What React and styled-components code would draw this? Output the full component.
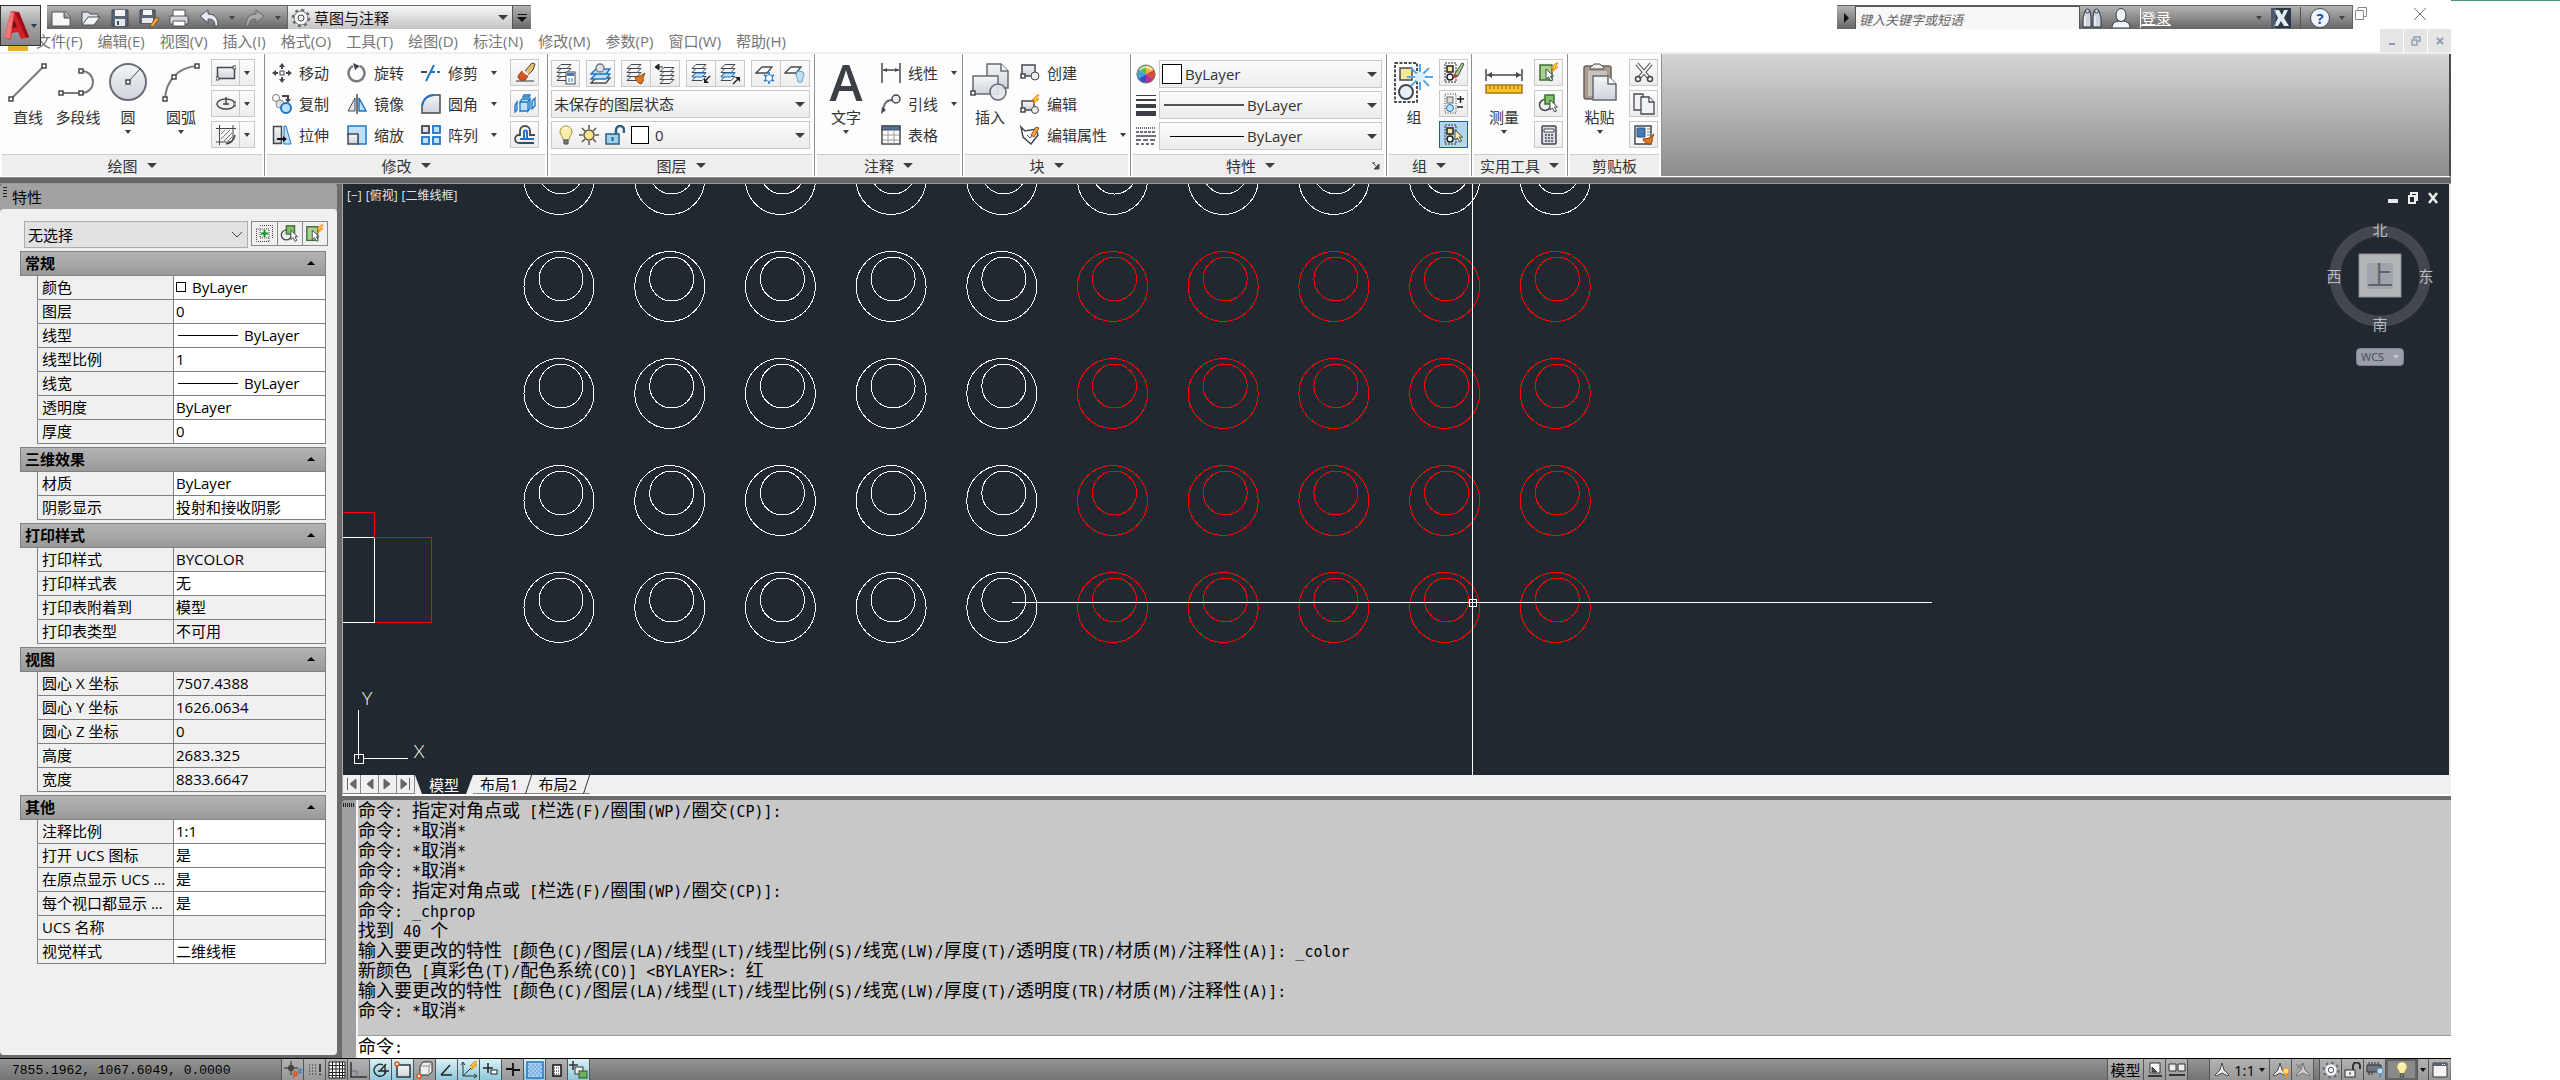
import React, { useState } from 'react';
import styled, { createGlobalStyle, css } from 'styled-components';

const GlobalStyle = createGlobalStyle`
    * {
        box-sizing: border-box;
    }
    body {
        margin: 0;
        background: #fff;
        color: #333;
        font: 15px/20px 'Open Sans', 'Noto Sans CJK SC', sans-serif;
    }
    button, select, input {
        margin: 0;
        padding: 0;
        border: 0;
        background: none;
        color: inherit;
        font: inherit;
        border-radius: 0;
        outline: none;
    }
    select {
        appearance: none;
    }
    svg {
        display: block;
        flex: none;
    }
`;

/* ---------- icons ---------- */

const D = '#44484e';
const B = '#1f74c4';
const L = '#bfe1f8';
const G = '#dfe2ea';

const layers = (
    <g fill="#f4f5f7" stroke={D}>
        <path d="M6 13.500h10l-4 4H2z" />
        <path d="M6 9.500h10l-4 4H2z" />
        <path d="M6 5.500h10l-4 4H2z" />
        <path d="M6 1.500h10l-4 4H2z" />
    </g>
);
const node = (x, y) => (
    <rect x={x - 2} y={y - 2} width="4" height="4" fill="#fff" stroke={D} strokeWidth="1.500" />
);
const pointer = (x, y, fill = '#fff') => (
    <path
        transform={`translate(${x} ${y})`}
        d="M0 0v10l2.500-2 2 4 2-1-2-4h3z"
        fill={fill}
        stroke={D}
    />
);
const bolt = (x, y) => (
    <path
        transform={`translate(${x} ${y})`}
        d="M5 0L0 5h3L1 9l6-5H4l3-4z"
        fill="#ffd23c"
        stroke="#f08a1c"
    />
);
const bulb = (
    <g>
        <path
            d="M7 1C3 1 1 4 1 7c0 3 3 4 3 8h6c0-4 3-5 3-8 0-3-2-6-6-6z"
            fill="#fdeea6"
            stroke="#a58d45"
        />
        <path d="M5 15h4v4H5z" fill="#7b8088" stroke={D} />
        <path d="M5 4c1-1 2-1 3-1" stroke="#fff" strokeWidth="2" fill="none" />
    </g>
);
const gear = (
    <g fill="#f3f4f6" stroke={D}>
        <circle cx="10" cy="10" r="8" strokeWidth="2.500" strokeDasharray="3 3.280" stroke="#666a70" />
        <circle cx="10" cy="10" r="7" stroke="#666a70" />
        <circle cx="10" cy="10" r="3" />
    </g>
);
const annoScale = (
    <path d="M8 1l2 7 5 5-1 1-6-3-6 3-1-1 5-5z" fill="#f4f4f4" stroke={D} />
);

const ICONS = {
    line: [40, 40, <g><path d="M3 37L36 4" stroke="#777b80" strokeWidth="2" />{node(3, 37)}{node(36, 4)}</g>],
    polyline: [40, 40, <g><path d="M3 31h21a11 11 0 000-22" fill="none" stroke="#777b80" strokeWidth="2" />{node(3, 31)}{node(23, 31)}{node(23, 9)}</g>],
    circle: [40, 40, <g><circle cx="20" cy="20" r="18" fill="url(#metal)" stroke="#6b6f75" strokeWidth="2" /><path d="M20 20L32 7" stroke={D} />{node(20, 20)}</g>],
    arc: [40, 40, <g><path d="M4 37C5 18 18 5 36 4" fill="none" stroke="#777b80" strokeWidth="2" />{node(4, 37)}{node(36, 4)}{node(13, 15)}</g>],
    rect: [20, 20, <g><rect x="1.500" y="4.500" width="17" height="11" fill="url(#metal)" stroke={D} strokeWidth="1.500" /><path d="M0 14h3v3H0zM17 3h3v3h-3z" fill="#fff" stroke={D} /></g>],
    ellipse: [20, 20, <g><ellipse cx="10" cy="10" rx="9" ry="5" fill="#eee" stroke={D} strokeWidth="1.500" /><path d="M10 3v8M7 10h6" stroke={D} strokeWidth="1.500" /><path d="M18 8h2v4h-2z" fill="#fff" stroke={D} /></g>],
    hatch: [20, 20, <g><path d="M3.500 0v20M17 0v14M0 3.500h20M0 17h14" stroke={D} fill="none" /><path d="M5 9l4-4M5 14l9-9M8 16l8-8M12 16l4-4" stroke="#777" /><path d="M19 10c-1 5-4 8-9 9" fill="none" stroke={D} strokeWidth="1.500" /></g>],
    move: [20, 20, <g stroke={D} fill={D}><path d="M10 2v4M10 14v4M2 10h4M14 10h4" strokeWidth="2" /><path d="M10 0l3 4H7zM10 20l3-4H7zM0 10l4-3v6zM20 10l-4-3v6z" stroke="none" /><rect x="8" y="8" width="4" height="4" fill="#fff" /></g>],
    rotate: [20, 20, <g><path d="M13 3a8 8 0 11-7 0" fill="none" stroke="#777b80" strokeWidth="2.500" /><path d="M6 0l7 3-5 4z" fill={D} /></g>],
    trim: [20, 20, <g strokeWidth="2" fill="none"><path d="M0 9h6" stroke={D} /><path d="M5 18L13 2" stroke={B} /><path d="M10 9h4M16 9h3" stroke={B} /></g>],
    erase: [22, 22, <g><path d="M2 19h18" stroke="#333" /><path d="M10 10L18 1l3 1-2 6-5 5z" fill="#e8c06c" stroke={D} /><path d="M4 14l4-5 6 5-3 4c-3 1-7 0-7-4z" fill="#d9541e" stroke="#7c3a22" /><path d="M9 9l5 4" stroke="#fff" strokeWidth="2" /></g>],
    copy: [20, 20, <g><circle cx="4" cy="4" r="3.500" fill="#fff" stroke="#777" /><circle cx="8" cy="10" r="4" fill={G} stroke="#888" /><circle cx="14" cy="14" r="5" fill={L} stroke={B} strokeWidth="2" /><path d="M10 2h6v4" fill="none" stroke={D} strokeWidth="2" /><path d="M13 5h6l-3 4z" fill={D} /></g>],
    mirror: [20, 20, <g><path d="M8 4v13H1z" fill={G} stroke={D} /><path d="M12 4v13h7z" fill={L} stroke={B} strokeWidth="1.500" /><path d="M10 0v20" stroke={D} strokeWidth="1.500" /></g>],
    fillet: [20, 20, <g><path d="M1 19V12C2 5 7 1 13 1h6v18z" fill="url(#metal)" stroke={D} strokeWidth="1.500" /><path d="M1 12C2 5 7 1 13 1" fill="none" stroke={B} strokeWidth="2" /></g>],
    explode: [22, 22, <g stroke={B} fill={L} strokeWidth="1.300"><path d="M6 9h8v9H6zM6 9l2-3h8l-2 3zM14 9l2-3v9l-2 3z" /><path d="M1 12l2-3v8l-2 2zM9 4l1-2h6l-1 2zM18 8l3-3v8l-3 3z" /></g>],
    stretch: [20, 20, <g><path d="M1.500 1.500h8v17h-8z" fill="url(#metal)" stroke={D} strokeWidth="1.500" /><path d="M12 1h2l5 18h-7z" fill={L} stroke={B} /><path d="M5 14h7" stroke="#111" strokeWidth="2" /><path d="M11 11l4 3-4 3z" fill="#111" /></g>],
    scale: [20, 20, <g><path d="M1 1h18v18h-8V10H1z" fill={L} stroke={B} strokeWidth="1.500" /><rect x="1" y="9" width="10" height="10" fill="url(#metal)" stroke={D} strokeWidth="1.500" /></g>],
    array: [20, 20, <g strokeWidth="1.800"><rect x="1" y="1" width="7" height="7" fill={G} stroke={D} /><g fill={L} stroke={B}><rect x="12" y="1" width="7" height="7" /><rect x="1" y="12" width="7" height="7" /><rect x="12" y="12" width="7" height="7" /></g></g>],
    offset: [22, 22, <g fill="none"><path d="M20 19H5a4 4 0 010-8h1V7a5 5 0 0110 0v4h5" stroke={D} strokeWidth="1.800" /><path d="M20 15H6h4V8a1.500 1.500 0 013 0v7" stroke={B} strokeWidth="2" /></g>],
    layerProps: [22, 22, <g>{layers}<rect x="11" y="9" width="9" height="12" fill="#fff" stroke={D} /><path d="M12 10h7v3h-7z" fill="#4679b4" /><path d="M13 16h2M16 16h2M13 18h2M16 18h2" stroke={B} /></g>],
    layerMatch: [22, 22, <g stroke={B} fill={L} strokeWidth="1.300"><path d="M6 15h14l-4 5H1z" fill="#fff" stroke={D} /><path d="M6 11h14l-4 5H1zM6 6h14l-4 5H1z" /><circle cx="10" cy="5" r="4" fill={G} stroke="#777" /></g>],
    layerIso: [22, 22, <g>{layers}<path d="M20 10l-5 3-5 1c1 4 3 6 6 7 2-2 3-4 2-6z" fill="#e07820" stroke="#8a4a1a" /></g>],
    layerPrev: [22, 22, <g><g transform="translate(4 3)">{layers}</g><path d="M2 4h7M1 4l4-3v6z" stroke="#222" fill="#222" /></g>],
    layerFreeze: [22, 22, <g>{layers}<path d="M6 10h10l-4 4H2z" fill={L} stroke={B} /><path d="M20 13l-5 5" stroke="#222" strokeWidth="1.500" /><path d="M14 15v5h5z" fill="#222" /></g>],
    layerOff: [22, 22, <g>{layers}<path d="M6 10h10l-4 4H2z" fill={L} stroke={B} /><path d="M14 21l5-5" stroke="#222" strokeWidth="1.500" /><path d="M21 14v5l-5-5z" fill="#222" /></g>],
    layerSnow: [22, 22, <g><path d="M7 4h10l-5 6H1z" fill="#fff" stroke={D} strokeWidth="1.300" /><path d="M14 9v12M9 12l10 6M19 12l-10 6" stroke={B} strokeWidth="1.500" /><circle cx="14" cy="15" r="3.500" fill="#fff" stroke={B} /></g>],
    layerBulb: [22, 22, <g><path d="M7 4h10l-5 6H1z" fill="#fff" stroke={D} strokeWidth="1.300" /><path d="M16 8a4 4 0 014 4c0 2-2 3-2 7h-4c0-4-2-5-2-7a4 4 0 014-4z" fill={L} stroke="#6d9cc8" /></g>],
    bulb: [14, 20, bulb],
    sun: [20, 20, <g stroke="#60584a" strokeWidth="1.500"><path d="M10 0v4M10 16v4M0 10h4M16 10h4M3 3l3 3M14 14l3 3M17 3l-3 3M6 14l-3 3" /><circle cx="10" cy="10" r="5" fill="#ffe48a" /></g>],
    unlock: [20, 20, <g><path d="M11 9V5a4 4 0 018 0v3" fill="none" stroke="#2f5f80" strokeWidth="2.500" /><rect x="1" y="9" width="13" height="10" fill="#9ad2ef" stroke="#2f5f80" strokeWidth="1.500" /><path d="M7.500 12v4" stroke="#2f5f80" strokeWidth="2" /></g>],
    linear: [20, 20, <g stroke={D} fill={D}><path d="M1 0v20M19 0v20M2 7h16" strokeWidth="1.500" /><path d="M2 7l4-2v4zM18 7l-4-2v4z" stroke="none" /></g>],
    leader: [20, 20, <g><path d="M2 17c1-9 4-11 10-11" fill="none" stroke="#666a70" strokeWidth="2" /><circle cx="15" cy="5" r="4" fill="#eee" stroke={D} strokeWidth="1.500" /><path d="M0 20l1-7 4 3z" fill={D} /></g>],
    table: [20, 20, <g><rect x="1" y="1" width="18" height="18" fill="#fff" stroke={D} strokeWidth="1.500" /><path d="M1 1h18v4H1z" fill="#56719c" stroke={D} /><path d="M2 10h16M2 15h16M7 6v13M13 6v13" stroke="#999" /></g>],
    insert: [40, 40, <g stroke="#666a70" strokeWidth="1.500"><path d="M17 2h14l7 7v17H17z" fill="url(#metal)" /><path d="M31 2v7h7" fill="#fff" /><path d="M3 14h25v18H3z" fill="url(#metal)" /><circle cx="28" cy="30" r="8" fill="#e3e6ecdd" />{node(3, 31)}</g>],
    create: [20, 20, <g><rect x="2" y="2" width="13" height="11" fill="url(#metal)" stroke={D} strokeWidth="1.500" /><circle cx="15" cy="13" r="4" fill="#eee" stroke={D} />{node(3, 13)}</g>],
    editBlock: [20, 20, <g><rect x="2" y="7" width="12" height="9" fill="url(#metal)" stroke={D} strokeWidth="1.500" /><circle cx="15" cy="16" r="3.500" fill="#eee" stroke={D} />{node(3, 16)}{bolt(12, 1)}</g>],
    editAttr: [20, 20, <g><path d="M1 2l4 4 11-2 2 6-7 9-8-7z" fill="#fff" stroke={D} strokeWidth="1.500" /><path d="M7 10l3 3 6-7" fill="none" stroke={D} /><path d="M11 10l5-8 3 1-5 9z" fill="#f5a340" stroke="#8d5a23" /></g>],
    wheel: [20, 20, <g><circle cx="10" cy="10" r="9.500" fill="#ddd" /><path d="M10 10V1a9 9 0 018 5z" fill="#f4b63a" /><path d="M10 10l8-4a9 9 0 010 9z" fill="#e2462e" /><path d="M10 10l8 5a9 9 0 01-8 4z" fill="#c0308e" /><path d="M10 10v9a9 9 0 01-8-4z" fill="#3a4fc4" /><path d="M10 10l-8 5a9 9 0 010-9z" fill="#3aa5d8" /><path d="M10 10L2 6a9 9 0 018-5z" fill="#62b844" /><circle cx="10" cy="10" r="9" fill="none" stroke="#777" /><path d="M4 6c3-4 9-4 12 0" stroke="#fff" strokeOpacity=".6" strokeWidth="2" fill="none" /></g>],
    weight: [20, 22, <path d="M0 1h20v1H0zM0 5h20v2H0zM0 10h20v4H0zM0 17h20v5H0z" fill="#3c4046" />],
    ltype: [20, 20, <g stroke="#3c4046" strokeWidth="1.500"><path d="M0 2h20" strokeDasharray="1 1" /><path d="M0 6h20" strokeDasharray="3 1" /><path d="M0 10h20" /><path d="M0 14h20" strokeDasharray="5 2" /><path d="M0 18h20" strokeDasharray="3 2" /></g>],
    group: [40, 42, <g><path d="M1 2h22v39H1z" fill="none" stroke="#111" strokeWidth="1.500" strokeDasharray="3 1.500" /><rect x="6" y="7" width="12" height="12" fill="#f3e79a" stroke={D} strokeWidth="1.500" /><circle cx="12" cy="31" r="7" fill="#e6f0f5" stroke={D} strokeWidth="2" /><g stroke="#5aa7e6" strokeWidth="2"><path d="M26 3v26M13 16h26M17 7l18 18M35 7L17 25" /></g><circle cx="26" cy="16" r="5" fill="#d9f0ff" /></g>],
    groupEdit: [22, 22, <g><path d="M2 1h11v19H2z" fill="none" stroke="#333" strokeDasharray="2 1" /><rect x="4" y="4" width="6" height="6" fill="#f3e79a" stroke="#222" strokeWidth="1.500" /><circle cx="7" cy="15" r="3" fill="#fff" stroke="#222" strokeWidth="1.500" /><path d="M11 13L19 1l2 1-6 12z" fill="#a9cc84" stroke={D} /><path d="M10 17l2-5 3 2z" fill="#c4302b" /></g>],
    groupAdd: [22, 22, <g><path d="M2 1h11v19H2z" fill="none" stroke="#333" strokeDasharray="1 1.500" /><rect x="4" y="4" width="6" height="6" fill="#ddd" stroke="#666" /><circle cx="7" cy="15" r="3.500" fill={L} stroke={B} /><path d="M14 6h7M17.500 3v7M14 14h6" stroke="#222" strokeWidth="1.500" /></g>],
    groupSel: [22, 22, <g><path d="M2 1h11v19H2z" fill="none" stroke="#333" strokeDasharray="2 1" /><rect x="4" y="4" width="6" height="6" fill="#f3e79a" stroke="#222" strokeWidth="1.500" /><circle cx="7" cy="15" r="3" fill="#fff" stroke="#222" strokeWidth="1.500" />{pointer(12, 6, '#fff7b0')}</g>],
    measure: [38, 26, <g><path d="M1 0v12M37 0v12M2 6h34" stroke={D} strokeWidth="1.500" /><path d="M2 6l5-3v6zM36 6l-5-3v6z" fill={D} /><rect x="1" y="16" width="36" height="8" fill="#f7c526" stroke="#a8741c" strokeWidth="1.500" /><path d="M5 17v3M9 17v3M13 17v3M17 17v3M21 17v3M25 17v3M29 17v3M33 17v3" stroke="#8b5e14" /></g>],
    quickSel: [22, 22, <g><rect x="2" y="3" width="12" height="15" fill="#a9d28e" stroke="#3f6f34" strokeWidth="1.500" />{bolt(13, 1)}{pointer(8, 7)}</g>],
    selAll: [22, 22, <g><circle cx="7" cy="12" r="5.500" fill="#eee" stroke={D} strokeWidth="1.500" /><rect x="7" y="2" width="9" height="9" fill="#7fbf6a" stroke="#3f6f34" strokeWidth="1.500" />{pointer(12, 7)}</g>],
    calc: [22, 22, <g><rect x="4" y="2" width="14" height="18" rx="1" fill="#d9dbe0" stroke={D} strokeWidth="1.500" /><path d="M6 5h10v3H6z" fill="#fff" stroke={D} /><path d="M7 11h2M10 11h2M13 11h2M7 14h2M10 14h2M13 14h2M7 17h2M10 17h2M13 17h2" stroke={D} strokeWidth="1.500" /></g>],
    paste: [36, 40, <g><rect x="2" y="4" width="27" height="33" rx="2" fill="#a99c90" stroke="#6b625a" strokeWidth="1.500" /><rect x="6" y="9" width="19" height="25" fill="#c9c2bb" /><path d="M8 7c0-3 3-3 4-5h6c1 2 4 2 4 5z" fill="#eee" stroke={D} /><path d="M11 14h15l8 8v16H11z" fill="url(#metal)" stroke="#666a70" strokeWidth="1.500" /><path d="M26 14v8h8" fill="#fff" stroke="#666a70" strokeWidth="1.500" /></g>],
    cut: [22, 22, <g fill="none" stroke={D}><path d="M4 2l12 14M18 2L6 16" strokeWidth="4" /><path d="M4 2l12 14M18 2L6 16" stroke="#eee" strokeWidth="2" /><circle cx="5" cy="17" r="2.500" strokeWidth="1.500" /><circle cx="17" cy="17" r="2.500" strokeWidth="1.500" /></g>],
    copyClip: [22, 22, <g fill="#f2f3f6" stroke={D} strokeWidth="1.300"><path d="M1 1h9v16H1z" /><path d="M8 4h8l5 5v12H8z" /><path d="M16 4v5h5" fill="#fff" /></g>],
    matchProp: [22, 22, <g><rect x="2" y="2" width="16" height="18" fill="#fff" stroke={D} strokeWidth="1.500" /><path d="M4 4h8v9H4z" fill="#4679b4" stroke="#23548c" /><path d="M14 5h3M14 8h3M14 11h3" stroke="#777" /><path d="M21 10l-5 4-6 1c1 4 4 5 7 5 2-1 3-3 2-5z" fill="#e07820" stroke="#8a4a1a" /></g>],
    newFile: [20, 18, <path d="M1 3h14l4 5v9H1zM13 3v6h6" fill="#f7f7f8" stroke="#555" strokeLinejoin="round" />],
    open: [20, 18, <g stroke="#4b4f55" fill="#dfe2e8"><path d="M1 16V3h6l2 2h8v3" /><path d="M1 16l6-8h12l-6 8z" fill="#f3f4f6" /></g>],
    save: [18, 18, <g><path d="M1 1h16v16H1z" fill="#5b6574" stroke="#3b4350" /><path d="M4 1h10v6H4z" fill="#f3f4f6" /><path d="M4 10h10v7H4z" fill="#e3e6ea" /><path d="M6 12h2v4H6z" fill="#444" /></g>],
    saveAs: [20, 18, <g><path d="M1 1h15v13H1z" fill="#5b6574" stroke="#3b4350" /><path d="M4 1h9v5H4z" fill="#f3f4f6" /><path d="M3 9h11v5H3z" fill="#e3e6ea" /><path d="M11 17l6-9 3 2-6 8z" fill="#f5a340" stroke="#7d5526" /></g>],
    print: [20, 18, <g stroke="#555"><path d="M4 1h12v7H4z" fill="#fff" /><path d="M1 7h18v8H1z" fill="#d5d8de" /><path d="M4 12h12v5H4z" fill="#fff" /></g>],
    undo: [20, 18, <path d="M1 7l8-6v4c6 0 10 3 10 12h-3c0-5-2-7-7-7v4z" fill="#e6eaf2" stroke="#4b5360" strokeLinejoin="round" />],
    redo: [20, 18, <path d="M19 7l-8-6v4C5 5 1 8 1 17h3c0-5 2-7 7-7v4z" fill="#a9a9a9" stroke="#666" strokeLinejoin="round" />],
    gear: [20, 20, gear],
    binoculars: [20, 20, <g stroke="#333a45" fill="#cfd5de"><path d="M3 3h5l1 6v10H1V10zM12 3h5l2 7v9h-8V9z" /><circle cx="5.500" cy="3" r="2" /><circle cx="14.500" cy="3" r="2" /><path d="M3 8v10M13 8v10" stroke="#fff" /></g>],
    user: [20, 20, <g stroke="#333a45" fill="#f0f3f7"><path d="M1 20c0-5 3-6 6-7h6c3 1 6 2 6 7z" /><ellipse cx="10" cy="7" rx="5" ry="6.500" /></g>],
    exchange: [20, 20, <g><path d="M0 0h20v20H0z" fill="#2d3947" /><path d="M3 2h5l3 5 2-5h4l-4 8 5 8h-5l-3-5-3 5H3l4-8z" fill="#e3eaf2" /><path d="M0 0h5v20H0z" fill="#6c7a8a" fillOpacity=".5" /></g>],
    restoreWin: [12, 13, <path d="M.500 3.500h8v9h-8zM3 3V.500h8.500v9H9" fill="none" stroke="#8a8a8a" />],
    closeWin: [14, 14, <path d="M1 1l12 12M13 1L1 13" stroke="#777" fill="none" />],
    mdiMin: [8, 8, <path d="M1 6h6v2H1z" fill="#8fa0b2" />],
    mdiRestore: [10, 10, <path d="M3 3V1h6v4H7M1 4h5v5H1z" fill="none" stroke="#8fa0b2" strokeWidth="1.500" />],
    mdiClose: [8, 8, <path d="M1 1l6 6M7 1L1 7" stroke="#8fa0b2" strokeWidth="2" />],
    vpMin: [10, 10, <path d="M0 6h10v4H0z" fill="#e8e8e8" />],
    vpRestore: [10, 12, <path d="M3 3V1h6v7H7M1 4h6v7H1z" fill="none" stroke="#eee" strokeWidth="2" />],
    vpClose: [10, 12, <path d="M1 1l8 10M9 1L1 11" stroke="#eee" strokeWidth="2.500" />],
    launcher: [8, 8, <path d="M0 1h3M1 1l4 4M7 2v5H2z" stroke={D} fill={D} />],
    pickAdd: [17, 17, <g><path d="M4 .500h12.500V13M.500 4v12.500H13M.500 4H4M13 13v3.500" fill="none" stroke="#444" strokeDasharray="1 1" /><rect x="4" y="4" width="9" height="9" fill="none" stroke="#444" strokeDasharray="1 1" /><path d="M8.500 5v7M5 8.500h7" stroke="#0a9a1a" strokeWidth="2" /></g>],
    // status bar
    infer: [18, 18, <g><path d="M7 0v14M0 7h14" stroke="#222" /><rect x="5" y="5" width="4" height="4" fill="none" stroke="#222" /><path d="M10 17v-6h3v3h-3" fill="none" stroke="#d9541e" strokeWidth="1.500" /><path d="M15 8h2v4h-2z" fill="none" stroke={B} /></g>],
    snap: [16, 16, <g stroke="#222" strokeDasharray="1 2"><path d="M2 3h9M2 6h9M2 9h9M2 12h9" /><path d="M13 2v8" strokeDasharray="none" strokeWidth="1.500" /><path d="M13 12v2" strokeWidth="2" /></g>],
    grid: [18, 18, <g><path d="M1 1h16v16H1z" fill="#fff" /><path d="M1 1h16v16H1zM4.500 1v16M8 1v16M11.500 1v16M14.500 1v16M1 4.500h16M1 8h16M1 11.500h16M1 14.500h16" stroke="#222" fill="none" /></g>],
    ortho: [18, 18, <g fill="none"><path d="M1 1v15h16" stroke="#333" strokeWidth="1.500" /><path d="M2 10h5v6" stroke="#5a6c94" /></g>],
    polar: [16, 16, <g fill="none" stroke="#222" strokeWidth="1.300"><path d="M13 9a6 6 0 11-3-6" /><path d="M5 9h11M7 9l6-7M12 3v9" /></g>],
    osnap: [18, 18, <g><rect x="3" y="4" width="13" height="12" fill="url(#metal)" stroke="#333" strokeWidth="1.500" /><circle cx="3" cy="3" r="2" fill="#fff" stroke="#e0561e" strokeWidth="1.500" /></g>],
    osnap3d: [18, 18, <g><path d="M4 5l3-4h9v10l-3 3H4z" fill="#eceef2" stroke="#333" /><path d="M13 5v9M4 5h9l3-4" fill="none" stroke="#888" /><circle cx="3" cy="15" r="2" fill="#fff" stroke="#e0561e" strokeWidth="1.500" /></g>],
    otrack: [16, 16, <path d="M2 13h11M2 13l9-10" stroke="#222" strokeWidth="1.500" />],
    ducs: [18, 18, <g><path d="M3 2v13h13M3 15l8-8" stroke="#333" fill="none" /><path d="M1 4l2-3 2 3M14 13l3 2-3 2" fill="none" stroke="#333" />{bolt(10, 0)}</g>],
    dyn: [16, 16, <g stroke="#222"><path d="M5 1v10M0 6h10" strokeWidth="1.500" /><rect x="8" y="8" width="6" height="4" fill="#fff" /></g>],
    lwt: [16, 16, <path d="M8 1v13M1 7h7M8 8h7" stroke="#111" strokeWidth="1.800" />],
    tpy: [18, 18, <g><rect x="1" y="1" width="16" height="16" fill="#a5cdf0" stroke={B} strokeWidth="1.500" /><path d="M2 4h14M2 8h14M2 12h14" stroke="#7fb2e2" strokeWidth="2" strokeDasharray="2 2" /><path d="M4 6h12M4 10h12M4 14h12" stroke="#7fb2e2" strokeWidth="2" strokeDasharray="2 2" /></g>],
    qp: [12, 14, <g><rect x="2" y="2" width="8" height="11" fill="#fff" stroke="#111" strokeWidth="1.500" /><path d="M3 5h6M3 8h6M3 11h6" stroke="#111" strokeDasharray="1 1" /></g>],
    cycle: [20, 18, <g><path d="M4 0v9M0 4h9" stroke="#333" strokeWidth="1.500" /><rect x="6" y="6" width="8" height="7" fill="#eee" stroke="#333" /><rect x="10" y="10" width="8" height="7" fill="#6fae5c" stroke="#27581d" /></g>],
    paper: [16, 16, <g><path d="M3 1h10v10H3z" fill="#fff" stroke="#333" /><path d="M5 5v5h5z" fill="#555" stroke="#333" /><path d="M1 14h14" stroke="#333" strokeWidth="2" /></g>],
    quickView: [18, 16, <g><path d="M1 2h7v7H1zM10 2h7v7h-7z" fill="#eee" stroke="#333" /><path d="M1 13h16" stroke="#333" strokeWidth="2" /></g>],
    anno: [16, 16, annoScale],
    annoVis: [18, 16, <g>{annoScale}<circle cx="14" cy="9" r="3" fill="#ffe08a" stroke="#f08a1c" /><path d="M14 12v4" stroke="#f08a1c" strokeWidth="2" /></g>],
    annoAuto: [16, 16, <g opacity=".55">{annoScale}<path d="M2 6L8 1M1 2l6 5" stroke="#444" /></g>],
    lockUi: [18, 16, <g><path d="M9 8V4a3 3 0 017 0v3" fill="none" stroke="#333" strokeWidth="2" /><rect x="1" y="8" width="10" height="7" fill="#eee" stroke="#333" /><path d="M6 10v3" stroke="#333" /></g>],
    hardware: [18, 16, <g><path d="M1 3h14v7H1z" fill="#6d7680" stroke="#333" /><path d="M3 0v3M6 0v3M9 0v3M12 0v3M3 10v3M6 10v3" stroke="#333" /><circle cx="14" cy="9" r="3" fill={L} stroke="#5a8fc0" /><path d="M14 12v4" stroke="#5a8fc0" strokeWidth="2" /></g>],
    clean: [16, 16, <g><path d="M1 1h14v14H1z" fill="#f4f4f4" stroke="#333" /><path d="M1 1h14v3H1z" fill="#59616e" /><path d="M10 2.500h1M12 2.500h1" stroke="#fff" /></g>],
};

const Icon = ({ name, size }) => {
    const [w, h, art] = ICONS[name];
    return (
        <svg
            width={size ? Math.round((w * size) / h) : w}
            height={size || h}
            viewBox={`0 0 ${w} ${h}`}
            fill="none"
            aria-hidden="true"
        >
            {art}
        </svg>
    );
};

const Caret = styled.span`
    flex: none;
    width: 0;
    height: 0;
    border: ${p => (p.$big ? 5 : 3)}px solid transparent;
    border-bottom-width: 0;
    border-top: ${p => (p.$big ? 5 : 4)}px solid ${p => p.$color || '#3a3e42'};
`;

/* ---------- frame ---------- */

const Desktop = styled.div`
    display: flex;
    min-height: 100vh;
`;

const DesktopEdge = styled.div`
    width: 109px;
    flex: none;
    border-top: 1px solid #4f9373;
`;

const Window = styled.div`
    position: relative;
    flex: 1;
    min-width: 0;
    display: flex;
    flex-direction: column;
    padding-top: 5px;
`;

const AppButton = styled.button`
    position: absolute;
    z-index: 2;
    top: 5px;
    left: 0;
    width: 41px;
    height: 41px;
    display: flex;
    align-items: center;
    padding-left: 3px;
    gap: 1px;
    border: 1px solid #333;
    background: linear-gradient(#d8d8d8, #a6a6a6 45%, #858585);
`;

const TitleRow = styled.header`
    display: flex;
    height: 24px;
    padding-left: 47px;
`;

const bar = css`
    display: flex;
    align-items: center;
    overflow: hidden;
    border-top: 1px solid #666;
    background: linear-gradient(#b3b3b3, #666);
`;

const QuickBar = styled.div`
    ${bar}
    padding-left: 4px;
`;

const QuickTools = styled.div`
    display: flex;
    align-items: center;
    gap: 10px;
    padding-right: 6px;
`;

const IconButton = styled.button`
    display: flex;
    align-items: center;
    justify-content: center;
`;

const Workspace = styled.label`
    display: flex;
    align-items: center;
    width: 225px;
    height: 23px;
    padding: 0 4px 0 3px;
    background: linear-gradient(#f7f7f7, #c4c4c4);
    border-left: 1px solid #666;
    color: #111;

    select {
        flex: 1;
        min-width: 0;
        padding-left: 3px;
    }
`;

const BarEnd = styled.button`
    display: flex;
    flex-direction: column;
    align-items: center;
    justify-content: center;
    gap: 2px;
    width: 19px;
    height: 23px;
    border-left: 1px solid #555;

    &::before {
        content: '';
        width: 9px;
        height: 1px;
        background: #111;
    }
`;

const InfoBar = styled.div`
    ${bar}
    width: 516px;
    margin-left: auto;
    border-right: 1px solid #666;
`;

const InfoToggle = styled.button`
    width: 18px;
    height: 23px;
    display: flex;
    align-items: center;
    justify-content: center;

    &::before {
        content: '';
        border: 5px solid transparent;
        border-right: 0;
        border-left-color: #111;
    }
`;

const SearchInput = styled.input`
    width: 225px;
    height: 23px;
    padding: 3px 3px 0;
    background: #f7f7f7;
    font-size: 13px;
    font-style: italic;
    border: solid #555;
    border-width: 1px 1px 0;

    &::placeholder {
        color: #666;
        opacity: 1;
    }
`;

const InfoItems = styled.div`
    flex: 1;
    display: flex;
    align-items: center;
    gap: 9px;
    padding: 0 7px 0 2px;
`;

const SignIn = styled.a`
    margin-right: auto;
    border-left: 1px solid #fff;
    color: #fff;
    text-decoration: underline;
`;

const HelpBadge = styled.button`
    width: 20px;
    height: 20px;
    border-radius: 50%;
    background: #f0f3f8;
    border: 1px solid #3f4a5c;
    color: #1c4fb4;
    font-weight: 700;
    line-height: 18px;
`;

const Divider = styled.span`
    width: 1px;
    height: 22px;
    background: #555;
`;

const WindowButtons = styled.div`
    display: flex;
    gap: 46px;
    width: 98px;
    padding: 2px 0 0 2px;
    align-items: flex-start;
`;

const MenuRow = styled.nav`
    display: flex;
    align-items: center;
    height: 25px;
    padding-left: 8px;
    border-bottom: 2px solid #efefef;
    color: #767676;
`;

const DrawingIcon = styled.span`
    width: 20px;
    height: 20px;
    margin-right: 8px;
    border-bottom: 5px solid #e6b422;
    background: #f7d766;
`;

const MenuItems = styled.div`
    display: flex;
    gap: 15px;
`;

const MdiButtons = styled.div`
    display: flex;
    gap: 1px;
    margin-left: auto;

    button {
        width: 23px;
        height: 23px;
        background: #e5e5e5;
    }
`;

/* ---------- ribbon ---------- */

const Ribbon = styled.div`
    display: flex;
    height: 123px;
    border-bottom: 1px solid #fff;
    border-right: 2px solid #4a4c50;
    background: linear-gradient(#d5d5d5, #8c8c8c);
`;

const RibbonPanel = styled.section`
    flex: none;
    width: ${p => p.$width}px;
    display: flex;
    flex-direction: column;
    background: #fdfdfd;
    border-right: 1px solid #909090;
`;

const PanelBody = styled.div`
    flex: 1;
    display: flex;
    padding: 5px 2px 0 ${p => p.$left || 2}px;
`;

const PanelTitle = styled.button`
    display: flex;
    align-items: center;
    justify-content: center;
    gap: 9px;
    height: 22px;
    margin: 0 2px;
    border-top: 1px solid #ccc;
    background: #eee;
`;

const LaunchTitle = styled(PanelTitle)`
    svg {
        margin: 0 3px 0 88px;
    }
    padding-left: 92px;
`;

const BigButton = styled.button`
    width: ${p => p.$width || 50}px;
    height: 84px;
    display: flex;
    flex-direction: column;
    align-items: center;
    gap: 3px;
`;

const BigArt = styled.span`
    height: 45px;
    display: flex;
    align-items: center;
`;

const LetterArt = styled(BigArt)`
    color: #3c4046;
    font-size: 50px;
    font-weight: 600;
`;

const Stack = styled.div`
    display: flex;
    flex-direction: column;
    gap: 4px;
    width: ${p => (p.$width ? `${p.$width}px` : 'auto')};
    margin-left: ${p => p.$left || 0}px;
`;

const ToolButton = styled.button`
    display: flex;
    align-items: center;
    gap: 7px;
    height: 27px;
    white-space: nowrap;

    ${Caret} {
        margin-left: 6px;
    }
`;

const SmallButton = styled.button`
    width: ${p => p.$width || 29}px;
    height: 27px;
    display: flex;
    align-items: center;
    justify-content: center;
    border: 1px solid ${p => (p.$on ? '#1a5fae' : '#c9c9c9')};
    background: ${p => (p.$on ? '#b4d6f3' : 'linear-gradient(#fcfcfc, #ededed)')};
`;

const ButtonPair = styled.div`
    display: flex;

    ${SmallButton} + ${SmallButton} {
        margin-left: -1px;
    }
`;

const LayerColumn = styled.div`
    flex: 1;
    display: flex;
    flex-direction: column;
    gap: 3px;
    padding: 1px 2px 0 1px;
`;

const LayerRow = styled.div`
    display: flex;
    justify-content: space-between;
`;

const Combo = styled.label`
    flex: 1;
    display: flex;
    align-items: center;
    gap: ${p => p.$gap || 3}px;
    height: 28px;
    max-height: 28px;
    padding: 0 4px 0 ${p => p.$left || 2}px;
    border: 1px solid #c9c9c9;
    background: linear-gradient(#fcfcfc, #ececec);

    select {
        flex: 1;
        min-width: 0;
    }
`;

const Swatch = styled.span`
    flex: none;
    width: ${p => p.$size}px;
    height: ${p => p.$size}px;
    border: 1px solid #000;
    background: #fff;
`;

const LineSample = styled.span`
    flex: none;
    width: ${p => p.$width}px;
    height: ${p => p.$weight || 1}px;
    margin-left: ${p => p.$left || 0}px;
    background: ${p => p.$color || '#000'};
`;

const PropRow = styled.div`
    display: flex;
    align-items: center;
    gap: 3px;
`;

const RibbonEdge = styled.div`
    height: 7px;
    border-top: 1px solid #8c8c8c;
    border-bottom: 1px solid #9c9c9c;
    background: #666;
`;

/* ---------- main ---------- */

const Main = styled.main`
    flex: 1;
    display: flex;
    background: #6b6b6b;
`;

const Palette = styled.aside`
    flex: none;
    width: 337px;
    margin: 0 5px 3px 0;
    border-radius: 3px;
    background: #a2a2a2;
    color: #000;
    overflow: hidden;
`;

const PaletteTitle = styled.h2`
    display: flex;
    align-items: center;
    gap: 5px;
    height: 25px;
    margin: 0;
    padding-left: 3px;
    font-size: 15px;
    font-weight: 400;

    &::before {
        content: '';
        align-self: flex-start;
        width: 4px;
        height: 11px;
        margin-top: 3px;
        background: repeating-linear-gradient(#222 0 1px, transparent 1px 3px);
    }
`;

const PaletteBody = styled.div`
    height: calc(100% - 25px);
    padding: 12px 9px 0 20px;
    border-radius: 4px;
    background: #f0f0f0;
`;

const PaletteTop = styled.div`
    display: flex;
    gap: 3px;
    padding-left: 4px;
    margin-bottom: 3px;
`;

const SelectionBox = styled.label`
    flex: 1;
    display: flex;
    align-items: center;
    height: 27px;
    padding: 0 5px 0 3px;
    border: 1px solid #adadad;
    background: #e1e1e1;

    select {
        flex: 1;
    }
`;

const PaletteTools = styled.div`
    display: flex;
    height: 25px;
    border: 1px solid #888;

    button {
        width: 25px;
    }
    button + button {
        border-left: 1px solid #888;
    }
`;

const Section = styled.section`
    margin: 0 2px 3px 0;
`;

const SectionTitle = styled.button`
    width: 100%;
    height: 25px;
    display: flex;
    align-items: center;
    justify-content: space-between;
    padding: 0 10px 2px 4px;
    border: 1px solid #808080;
    background: linear-gradient(#b4b4b4, #999);
    font-weight: 700;

    &::after {
        content: '';
        border: 4px solid transparent;
        border-top: 0;
        border-bottom-color: #000;
    }
`;

const PropTable = styled.table`
    width: calc(100% - 17px);
    margin-left: 17px;
    border-collapse: separate;
    border-spacing: 0;
    border-right: 1px solid #808080;
    table-layout: fixed;

    th,
    td {
        height: 24px;
        padding: 0 0 1px 2px;
        border: solid #808080;
        border-width: 0 0 1px 1px;
        line-height: 20px;
        text-align: left;
        font-weight: 400;
        white-space: nowrap;
    }
    th {
        width: 136px;
        padding-left: 4px;
    }
`;

const ValueCell = styled.td`
    background: ${p => (p.$locked ? '#f0f0f0' : '#fff')};
`;

const Value = styled.span`
    display: flex;
    align-items: center;
    gap: 6px;
`;

const Workarea = styled.div`
    flex: 1;
    min-width: 0;
    display: flex;
    flex-direction: column;
`;

const Viewport = styled.div`
    position: relative;
    flex: 1;
    min-height: 300px;
    border-left: 1px solid #aaa;
    border-right: 2px solid #eee;
    background: #212830;
    overflow: hidden;
`;

const Canvas = styled.svg`
    position: absolute;
    inset: 0;
    width: 100%;
    height: 100%;
`;

const ViewLabels = styled.div`
    position: absolute;
    top: 2px;
    left: 4px;
    display: flex;
    gap: 4px;
    color: #e4e4e4;
    font-size: 12px;
`;

const ViewControls = styled.div`
    position: absolute;
    top: 8px;
    right: 11px;
    display: flex;
    gap: 10px;
`;

const CubeBox = styled.div`
    position: absolute;
    top: 36px;
    right: 15px;
    width: 108px;
    display: flex;
    flex-direction: column;
    align-items: center;
    gap: 10px;
`;

const WcsButton = styled.button`
    display: flex;
    align-items: center;
    justify-content: space-between;
    width: 48px;
    height: 18px;
    padding: 0 4px;
    border: 1px solid #7f828f;
    border-radius: 4px;
    background: #9a9daa;
    color: #454a58;
    font-size: 11px;
`;

const TabBar = styled.div`
    display: flex;
    height: 21px;
    border-left: 1px solid #aaa;
    border-bottom: 2px solid #fff;
    background: #f0f0f0;
    color: #000;
`;

const TabNav = styled.button`
    width: 18px;
    display: flex;
    align-items: center;
    justify-content: center;
    border-right: 1px solid #888;
    border-bottom: 1px solid #888;
`;

const Tab = styled.button`
    position: relative;
    height: 19px;
    line-height: 18px;
    padding: 0 14px;
    ${p =>
        p.$on
            ? css`
                  color: #fff;
                  background: #212830;
                  clip-path: polygon(0 0, 100% 0, calc(100% - 7px) 100%, 7px 100%);
              `
            : css`
                  padding: 0 13px 0 7px;
                  border-bottom: 1px solid #888;
                  &::after {
                      content: '';
                      position: absolute;
                      top: 0;
                      right: 3px;
                      width: 1px;
                      height: 19px;
                      background: #333;
                      transform: skewX(-18deg);
                  }
              `}
`;

const CommandArea = styled.div`
    display: flex;
    margin-top: 4px;
`;

const CommandGrip = styled.div`
    width: 16px;
    border-right: 2px solid #f4f4f4;
    border-radius: 4px 0 0 0;
    background: #a0a0a0;

    &::before {
        content: '';
        display: block;
        width: 11px;
        height: 4px;
        margin: 3px 0 0 1px;
        background: repeating-linear-gradient(90deg, #222 0 1px, transparent 1px 2px);
    }
`;

const CommandBody = styled.div`
    flex: 1;
    color: #000;
    font-family: 'DejaVu Sans Mono', 'Noto Sans CJK SC', monospace;
`;

const CommandLog = styled.div`
    padding-bottom: 15px;
    background: #c8c8c8;
    border-bottom: 1px solid #999;
`;

const CommandLine = styled.div`
    height: 20px;
    line-height: 20px;
    white-space: pre;
`;

const Wide = styled.span`
    font-family: 'Noto Sans CJK SC', sans-serif;
    font-size: 18px;
    line-height: 1;
`;

const CommandPrompt = styled.label`
    display: flex;
    height: 22px;
    line-height: 24px;
    background: #fff;

    input {
        flex: 1;
        padding-left: 9px;
    }
`;

/* ---------- status bar ---------- */

const StatusBar = styled.footer`
    display: flex;
    height: 22px;
    border-top: 1px solid #000;
    background: linear-gradient(#959595, #737373);
    color: #000;
`;

const Coordinates = styled.span`
    width: 281px;
    padding: 2px 0 0 12px;
    font: 13px/20px 'Liberation Mono', monospace;
    white-space: pre;
`;

const StatusButton = styled.button`
    width: ${p => p.$width || 22}px;
    display: flex;
    align-items: center;
    justify-content: center;
    gap: 4px;
    border-left: 1px solid #555;
    background: ${p =>
        p.$on ? 'linear-gradient(#d9f0f6, #8fc8da)' : 'linear-gradient(#b2b2b2, #989898)'};
`;

const StatusRight = styled.div`
    display: flex;
    margin-left: auto;
    margin-right: 1px;
`;

const StatusGap = styled.span`
    width: ${p => p.$width}px;
    border-left: 1px solid #555;
`;

const BulbWell = styled(StatusButton)`
    background: #8a8a8a;
    box-shadow: inset 0 0 0 2px #666;
`;

/* ---------- data ---------- */

const MENUS = [
    '文件(F)', '编辑(E)', '视图(V)', '插入(I)', '格式(O)', '工具(T)',
    '绘图(D)', '标注(N)', '修改(M)', '参数(P)', '窗口(W)', '帮助(H)'
];

const SECTIONS = [
    {
        title: '常规',
        rows: [
            ['颜色', 'ByLayer', 'swatch'],
            ['图层', '0'],
            ['线型', 'ByLayer', 'line'],
            ['线型比例', '1'],
            ['线宽', 'ByLayer', 'line'],
            ['透明度', 'ByLayer'],
            ['厚度', '0']
        ]
    },
    { title: '三维效果', rows: [['材质', 'ByLayer'], ['阴影显示', '投射和接收阴影']] },
    {
        title: '打印样式',
        rows: [
            ['打印样式', 'BYCOLOR', 'locked'],
            ['打印样式表', '无'],
            ['打印表附着到', '模型', 'locked'],
            ['打印表类型', '不可用', 'locked']
        ]
    },
    {
        title: '视图',
        rows: [
            ['圆心 X 坐标', '7507.4388', 'locked'],
            ['圆心 Y 坐标', '1626.0634', 'locked'],
            ['圆心 Z 坐标', '0', 'locked'],
            ['高度', '2683.325', 'locked'],
            ['宽度', '8833.6647', 'locked']
        ]
    },
    {
        title: '其他',
        rows: [
            ['注释比例', '1:1'],
            ['打开 UCS 图标', '是'],
            ['在原点显示 UCS ...', '是'],
            ['每个视口都显示 ...', '是'],
            ['UCS 名称', '', 'locked'],
            ['视觉样式', '二维线框']
        ]
    }
];

const PROMPT = '输入要更改的特性 [颜色(C)/图层(LA)/线型(LT)/线型比例(S)/线宽(LW)/厚度(T)/透明度(TR)/材质(M)/注释性(A)]:';

const LOG = [
    '命令: 指定对角点或 [栏选(F)/圈围(WP)/圈交(CP)]:',
    '命令: *取消*',
    '命令: *取消*',
    '命令: *取消*',
    '命令: 指定对角点或 [栏选(F)/圈围(WP)/圈交(CP)]:',
    '命令: _chprop',
    '找到 40 个',
    PROMPT + ' _color',
    '新颜色 [真彩色(T)/配色系统(CO)] <BYLAYER>: 红',
    PROMPT,
    '命令: *取消*'
];

const TOGGLES = [
    ['infer', '推断约束'], ['snap', '捕捉模式'], ['grid', '栅格显示'], ['ortho', '正交模式'],
    ['polar', '极轴追踪', true], ['osnap', '对象捕捉', true], ['osnap3d', '三维对象捕捉'],
    ['otrack', '对象捕捉追踪', true], ['ducs', '动态 UCS', true], ['dyn', '动态输入', true],
    ['lwt', '线宽'], ['tpy', '透明度', true], ['qp', '快捷特性'], ['cycle', '选择循环', true]
];

/* ---------- parts ---------- */

// Han text takes two cells of the console grid, latin one.
const Cells = ({ text }) =>
    text
        .split(/([\u4e00-\u9fff]+)/)
        .map((part, i) => (i % 2 ? <Wide key={i}>{part}</Wide> : part));

const Big = ({ icon, label, menu, width }) => (
    <BigButton $width={width}>
        <BigArt>
            <Icon name={icon} />
        </BigArt>
        {label}
        {menu && <Caret />}
    </BigButton>
);

const Tool = ({ icon, label, menu }) => (
    <ToolButton>
        <Icon name={icon} />
        {label}
        {menu && <Caret />}
    </ToolButton>
);

const Small = ({ icon, label, on, width }) => (
    <SmallButton aria-label={label} $on={on} $width={width}>
        <Icon name={icon} />
    </SmallButton>
);

const RibbonBar = () => (
    <Ribbon>
        <RibbonPanel $width={265}>
            <PanelBody $left={3}>
                <Big icon="line" label="直线" />
                <Big icon="polyline" label="多段线" />
                <Big icon="circle" label="圆" menu />
                <Big icon="arc" label="圆弧" menu width={56} />
                <Stack $left={2}>
                    {[['rect', '矩形'], ['ellipse', '椭圆'], ['hatch', '图案填充']].map(([icon, label]) => (
                        <ButtonPair key={icon}>
                            <Small icon={icon} label={label} />
                            <SmallButton aria-label={`${label}选项`} $width={16}>
                                <Caret />
                            </SmallButton>
                        </ButtonPair>
                    ))}
                </Stack>
            </PanelBody>
            <PanelTitle>绘图 <Caret $big /></PanelTitle>
        </RibbonPanel>

        <RibbonPanel $width={283}>
            <PanelBody $left={7}>
                <Stack $width={75}>
                    <Tool icon="move" label="移动" />
                    <Tool icon="copy" label="复制" />
                    <Tool icon="stretch" label="拉伸" />
                </Stack>
                <Stack $width={74}>
                    <Tool icon="rotate" label="旋转" />
                    <Tool icon="mirror" label="镜像" />
                    <Tool icon="scale" label="缩放" />
                </Stack>
                <Stack $width={89}>
                    <Tool icon="trim" label="修剪" menu />
                    <Tool icon="fillet" label="圆角" menu />
                    <Tool icon="array" label="阵列" menu />
                </Stack>
                <Stack>
                    <Small icon="erase" label="删除" />
                    <Small icon="explode" label="分解" />
                    <Small icon="offset" label="偏移" />
                </Stack>
            </PanelBody>
            <PanelTitle>修改 <Caret $big /></PanelTitle>
        </RibbonPanel>

        <RibbonPanel $width={267}>
            <PanelBody>
                <LayerColumn>
                    <LayerRow>
                        <Small icon="layerProps" label="图层特性" />
                        <Small icon="layerMatch" label="设为当前" />
                        <ButtonPair>
                            <Small icon="layerIso" label="匹配" width={30} />
                            <Small icon="layerPrev" label="上一个" width={30} />
                        </ButtonPair>
                        <ButtonPair>
                            <Small icon="layerFreeze" label="隔离" width={30} />
                            <Small icon="layerOff" label="取消隔离" width={30} />
                        </ButtonPair>
                        <ButtonPair>
                            <Small icon="layerSnow" label="冻结" width={30} />
                            <Small icon="layerBulb" label="关" width={30} />
                        </ButtonPair>
                    </LayerRow>
                    <Combo>
                        <select aria-label="图层状态"><option>未保存的图层状态</option></select>
                        <Caret $big />
                    </Combo>
                    <Combo $left={7} $gap={6}>
                        <Icon name="bulb" />
                        <Icon name="sun" />
                        <Icon name="unlock" />
                        <Swatch $size={18} />
                        <select aria-label="图层"><option>0</option></select>
                        <Caret $big />
                    </Combo>
                </LayerColumn>
            </PanelBody>
            <PanelTitle>图层 <Caret $big /></PanelTitle>
        </RibbonPanel>

        <RibbonPanel $width={148}>
            <PanelBody>
                <BigButton $width={58}>
                    <LetterArt aria-hidden="true">A</LetterArt>
                    文字
                    <Caret />
                </BigButton>
                <Stack $left={6}>
                    <Tool icon="linear" label="线性" menu />
                    <Tool icon="leader" label="引线" menu />
                    <Tool icon="table" label="表格" />
                </Stack>
            </PanelBody>
            <PanelTitle>注释 <Caret $big /></PanelTitle>
        </RibbonPanel>

        <RibbonPanel $width={168}>
            <PanelBody>
                <Big icon="insert" label="插入" />
                <Stack $left={5}>
                    <Tool icon="create" label="创建" />
                    <Tool icon="editBlock" label="编辑" />
                    <Tool icon="editAttr" label="编辑属性" menu />
                </Stack>
            </PanelBody>
            <PanelTitle>块 <Caret $big /></PanelTitle>
        </RibbonPanel>

        <RibbonPanel $width={256}>
            <PanelBody $left={4}>
                <LayerColumn>
                    <PropRow>
                        <Icon name="wheel" />
                        <Combo>
                            <Swatch $size={20} />
                            <select aria-label="对象颜色"><option>ByLayer</option></select>
                            <Caret $big />
                        </Combo>
                    </PropRow>
                    <PropRow>
                        <Icon name="weight" />
                        <Combo $left={4}>
                            <LineSample $width={80} $weight={2} $color="#555" />
                            <select aria-label="线宽"><option>ByLayer</option></select>
                            <Caret $big />
                        </Combo>
                    </PropRow>
                    <PropRow>
                        <Icon name="ltype" />
                        <Combo $left={4}>
                            <LineSample $width={74} $left={6} />
                            <select aria-label="线型"><option>ByLayer</option></select>
                            <Caret $big />
                        </Combo>
                    </PropRow>
                </LayerColumn>
            </PanelBody>
            <LaunchTitle>特性 <Caret $big /><Icon name="launcher" /></LaunchTitle>
        </RibbonPanel>

        <RibbonPanel $width={85}>
            <PanelBody>
                <Big icon="group" label="组" />
                <Stack>
                    <Small icon="groupEdit" label="组编辑" />
                    <Small icon="groupAdd" label="添加到组" />
                    <Small icon="groupSel" label="组选择" on />
                </Stack>
            </PanelBody>
            <PanelTitle>组 <Caret $big /></PanelTitle>
        </RibbonPanel>

        <RibbonPanel $width={96}>
            <PanelBody>
                <Big icon="measure" label="测量" menu width={60} />
                <Stack>
                    <Small icon="quickSel" label="快速选择" />
                    <Small icon="selAll" label="全部选择" />
                    <Small icon="calc" label="快速计算器" />
                </Stack>
            </PanelBody>
            <PanelTitle>实用工具 <Caret $big /></PanelTitle>
        </RibbonPanel>

        <RibbonPanel $width={94}>
            <PanelBody>
                <Big icon="paste" label="粘贴" menu width={59} />
                <Stack>
                    <Small icon="cut" label="剪切" />
                    <Small icon="copyClip" label="复制剪裁" />
                    <Small icon="matchProp" label="特性匹配" />
                </Stack>
            </PanelBody>
            <PanelTitle>剪贴板</PanelTitle>
        </RibbonPanel>
    </Ribbon>
);

const PropertyPalette = () => (
    <Palette>
        <PaletteTitle>特性</PaletteTitle>
        <PaletteBody>
            <PaletteTop>
                <SelectionBox>
                    <select aria-label="选择"><option>无选择</option></select>
                    <svg width="10" height="6" viewBox="0 0 10 6">
                        <path d="M0 0l5 5 5-5" fill="none" stroke="#444" />
                    </svg>
                </SelectionBox>
                <PaletteTools>
                    <IconButton aria-label="切换 PICKADD"><Icon name="pickAdd" /></IconButton>
                    <IconButton aria-label="选择对象"><Icon name="selAll" size={20} /></IconButton>
                    <IconButton aria-label="快速选择"><Icon name="quickSel" size={20} /></IconButton>
                </PaletteTools>
            </PaletteTop>
            {SECTIONS.map(({ title, rows }) => (
                <Section key={title}>
                    <SectionTitle>{title}</SectionTitle>
                    <PropTable>
                        <tbody>
                            {rows.map(([label, value, kind]) => (
                                <tr key={label}>
                                    <th scope="row">{label}</th>
                                    <ValueCell $locked={kind === 'locked'}>
                                        <Value>
                                            {kind === 'swatch' && <Swatch $size={10} />}
                                            {kind === 'line' && <LineSample $width={60} $left={2} />}
                                            {value}
                                        </Value>
                                    </ValueCell>
                                </tr>
                            ))}
                        </tbody>
                    </PropTable>
                </Section>
            ))}
        </PaletteBody>
    </Palette>
);

const COLS = [0, 1, 2, 3, 4, 5, 6, 7, 8, 9];
const ROWS = [0, 1, 2, 3, 4];

const Drawing = () => (
    <Canvas fill="none" stroke="#fff" shapeRendering="crispEdges">
        {ROWS.map(r =>
            COLS.map(c => {
                const cx = 216 + c * 110.7;
                const cy = -5 + r * 107;
                return (
                    <g key={`${r}-${c}`} stroke={c > 4 && r > 0 ? '#f00' : '#fff'}>
                        <circle cx={cx} cy={cy + 0.5} r="35" />
                        <circle cx={cx + 2} cy={cy - 7} r="22" />
                    </g>
                );
            })
        )}
        <path d="M0 353.500h31.500v85H0" />
        <path d="M0 328.500h31.500v25h57v85h-57" stroke="#f00" />
        <path d="M669 418.500h920" />
        <path d="M1129.500 0v2000" />
        <rect x="1126" y="415" width="7" height="7" />
        <svg y="100%" overflow="visible">
            <path d="M15.500-65v49M20-16.500h45M11.500-20.500h9v9h-9z" />
            <g fill="#fff" stroke="none" fontSize="18" fontFamily="Lato" fontWeight="300" textAnchor="middle">
                <text x="24" y="-70">Y</text>
                <text x="76" y="-17">X</text>
            </g>
        </svg>
    </Canvas>
);

const ViewCube = () => (
    <CubeBox>
        <svg width="108" height="118" viewBox="0 0 108 118">
            <circle cx="54" cy="56" r="45" fill="none" stroke="#44474f" strokeWidth="11" />
            <path d="M33 34h42v43H33z" fill="#b4b5b7" stroke="#8f9092" />
            <path d="M41 43h26v26H41z" fill="#a0a4ab" />
            <g fill="#b9bbbe" fontSize="15" textAnchor="middle" fontFamily="Noto Sans CJK SC">
                <text x="54" y="16">北</text>
                <text x="54" y="110">南</text>
                <text x="8" y="62">西</text>
                <text x="100" y="62">东</text>
                <text x="54" y="65" fontSize="26" fill="#5c626c">上</text>
            </g>
        </svg>
        <WcsButton>
            WCS <Caret $color="#c3c6d2" />
        </WcsButton>
    </CubeBox>
);

const App = () => {
    const [toggles, setToggles] = useState(
        Object.fromEntries(TOGGLES.map(([name, , on]) => [name, !!on]))
    );

    return (
        <Desktop>
            <GlobalStyle />
            <Window>
                <AppButton aria-label="应用程序菜单">
                    <svg width="26" height="34" viewBox="0 0 26 34">
                        <linearGradient id="metal" x2="0" y2="1">
                            <stop offset="0" stopColor="#f4f5f7" />
                            <stop offset="1" stopColor="#cfd3db" />
                        </linearGradient>
                        <path d="M7 2l8 1 10 25-8 2-3-7-6 1-2 7-6-3z" fill="#d5202a" />
                        <path d="M7 2l3 2-4 26-6-2z" fill="#f0777a" />
                        <path d="M10 11l3 7-5 1z" fill="#6d0f14" />
                        <path d="M15 3l10 25-3 1L11 4z" fill="#9e1018" />
                    </svg>
                    <Caret $color="#2b3852" />
                </AppButton>
                <TitleRow>
                    <QuickBar>
                        <QuickTools>
                            <IconButton aria-label="新建"><Icon name="newFile" /></IconButton>
                            <IconButton aria-label="打开"><Icon name="open" /></IconButton>
                            <IconButton aria-label="保存"><Icon name="save" /></IconButton>
                            <IconButton aria-label="另存为"><Icon name="saveAs" /></IconButton>
                            <IconButton aria-label="打印"><Icon name="print" /></IconButton>
                            <IconButton aria-label="放弃"><Icon name="undo" /></IconButton>
                            <Caret $color="#444" />
                            <IconButton aria-label="重做"><Icon name="redo" /></IconButton>
                            <Caret $color="#444" />
                        </QuickTools>
                        <Workspace>
                            <Icon name="gear" />
                            <select aria-label="工作空间"><option>草图与注释</option></select>
                            <Caret $big />
                        </Workspace>
                        <BarEnd aria-label="自定义快速访问工具栏"><Caret $big $color="#111" /></BarEnd>
                    </QuickBar>
                    <InfoBar>
                        <InfoToggle aria-label="折叠" />
                        <SearchInput aria-label="搜索" placeholder="键入关键字或短语" />
                        <InfoItems>
                            <IconButton aria-label="搜索"><Icon name="binoculars" /></IconButton>
                            <Icon name="user" />
                            <SignIn href="#">登录</SignIn>
                            <Caret $color="#444" />
                            <IconButton aria-label="Exchange"><Icon name="exchange" /></IconButton>
                            <Divider />
                            <HelpBadge>?</HelpBadge>
                            <Caret $color="#444" />
                        </InfoItems>
                    </InfoBar>
                    <WindowButtons>
                        <IconButton aria-label="还原"><Icon name="restoreWin" /></IconButton>
                        <IconButton aria-label="关闭"><Icon name="closeWin" /></IconButton>
                    </WindowButtons>
                </TitleRow>
                <MenuRow>
                    <DrawingIcon />
                    <MenuItems>
                        {MENUS.map(m => (
                            <button key={m}>{m}</button>
                        ))}
                    </MenuItems>
                    <MdiButtons>
                        <IconButton aria-label="最小化"><Icon name="mdiMin" /></IconButton>
                        <IconButton aria-label="还原"><Icon name="mdiRestore" /></IconButton>
                        <IconButton aria-label="关闭"><Icon name="mdiClose" /></IconButton>
                    </MdiButtons>
                </MenuRow>
                <RibbonBar />
                <RibbonEdge />
                <Main>
                    <PropertyPalette />
                    <Workarea>
                        <Viewport>
                            <Drawing />
                            <ViewLabels>
                                <button>[−]</button>
                                <button>[俯视]</button>
                                <button>[二维线框]</button>
                            </ViewLabels>
                            <ViewControls>
                                <IconButton aria-label="最小化"><Icon name="vpMin" /></IconButton>
                                <IconButton aria-label="还原"><Icon name="vpRestore" /></IconButton>
                                <IconButton aria-label="关闭"><Icon name="vpClose" /></IconButton>
                            </ViewControls>
                            <ViewCube />
                        </Viewport>
                        <TabBar>
                            {[
                                ['第一个', 'M1.500 0v12M10 1v10L4 6z'],
                                ['上一个', 'M9 1v10L3 6z'],
                                ['下一个', 'M2 1v10l6-5z'],
                                ['最后一个', 'M9.500 0v12M1 1v10l6-5z']
                            ].map(([label, d]) => (
                                <TabNav key={label} aria-label={label}>
                                    <svg width="11" height="12" viewBox="0 0 11 12">
                                        <path d={d} fill="#666" stroke="#666" />
                                    </svg>
                                </TabNav>
                            ))}
                            <Tab $on>模型</Tab>
                            <Tab>布局1</Tab>
                            <Tab>布局2</Tab>
                        </TabBar>
                        <CommandArea>
                            <CommandGrip />
                            <CommandBody>
                                <CommandLog>
                                    {LOG.map((line, i) => (
                                        <CommandLine key={i}>
                                            <Cells text={line} />
                                        </CommandLine>
                                    ))}
                                </CommandLog>
                                <CommandPrompt>
                                    <span><Cells text="命令:" /></span>
                                    <input type="text" />
                                </CommandPrompt>
                            </CommandBody>
                        </CommandArea>
                    </Workarea>
                </Main>
                <StatusBar>
                    <Coordinates>7855.1962, 1067.6049, 0.0000</Coordinates>
                    {TOGGLES.map(([name, label]) => (
                        <StatusButton
                            key={name}
                            aria-label={label}
                            $on={toggles[name]}
                            onClick={() => setToggles({ ...toggles, [name]: !toggles[name] })}
                        >
                            <Icon name={name} />
                        </StatusButton>
                    ))}
                    <StatusGap $width={1} />
                    <StatusRight>
                        <StatusButton $width={36}>模型</StatusButton>
                        <StatusButton aria-label="布局"><Icon name="paper" /></StatusButton>
                        <StatusButton aria-label="快速查看"><Icon name="quickView" /></StatusButton>
                        <StatusGap $width={22} />
                        <StatusButton $width={60}>
                            <Icon name="anno" />1:1<Caret $color="#111" />
                        </StatusButton>
                        <StatusButton aria-label="注释可见性"><Icon name="annoVis" /></StatusButton>
                        <StatusButton aria-label="自动缩放"><Icon name="annoAuto" /></StatusButton>
                        <StatusGap $width={6} />
                        <StatusButton aria-label="切换工作空间"><Icon name="gear" size={18} /></StatusButton>
                        <StatusButton aria-label="锁定"><Icon name="lockUi" /></StatusButton>
                        <StatusButton aria-label="硬件加速"><Icon name="hardware" /></StatusButton>
                        <BulbWell aria-label="隔离对象" $width={32}><Icon name="bulb" size={17} /></BulbWell>
                        <StatusButton aria-label="状态栏菜单" $width={11}><Caret $color="#111" /></StatusButton>
                        <StatusButton aria-label="全屏显示"><Icon name="clean" /></StatusButton>
                    </StatusRight>
                </StatusBar>
            </Window>
            <DesktopEdge />
        </Desktop>
    );
};

export default App;
